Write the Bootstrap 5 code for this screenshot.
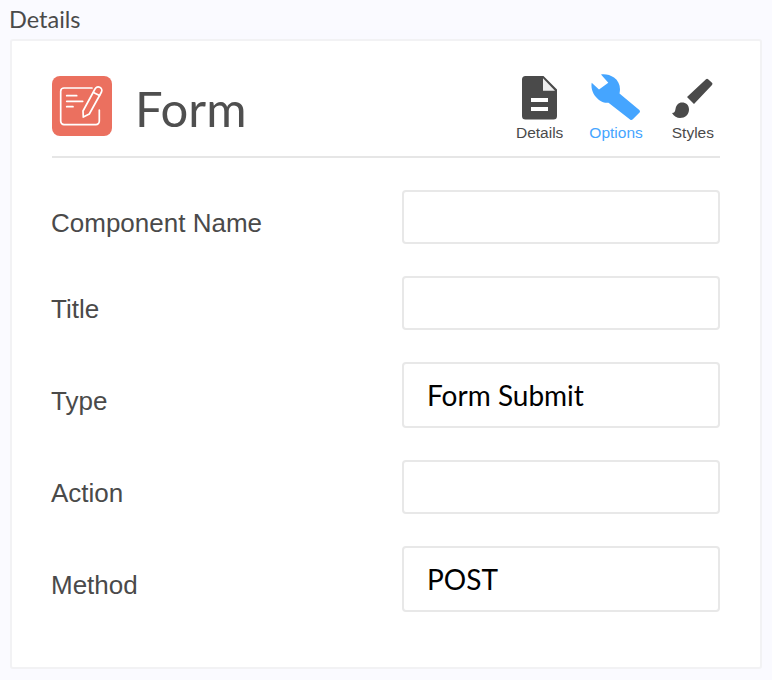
<!DOCTYPE html>
<html lang="en">
<head>
  <meta charset="UTF-8">
  <title>Form Details</title>
  <link rel="stylesheet" href="https://cdn.jsdelivr.net/npm/bootstrap@5.3.0/dist/css/bootstrap.min.css">
  <style>
    body {
      background-color: #fafaff;
      font-family: "Liberation Sans", sans-serif;
      color: #4a4a4a;
      height: 680px;
      overflow: hidden;
    }

    .page-title {
      font-family: Lato, sans-serif;
      font-size: 23.5px;
      line-height: 25px;
      padding: 7px 0 7px 9px;
      color: #4a4a4a;
    }

    .panel {
      margin-left: 10px;
      width: 752px;
      height: 630px;
      background: #fff;
      border: 2px solid #f2f2f4;
      border-radius: 3px;
      padding: 35px 40px 0 40px;
    }

    .panel-head {
      height: 82px;
      border-bottom: 2px solid #e6e6e6;
      padding-right: 6px;
    }

    .form-logo {
      width: 60px;
      height: 60px;
      background: #eb705f;
      border-radius: 8px;
    }

    .form-name {
      font-family: Lato, sans-serif;
      font-size: 49px;
      line-height: 60px;
      margin: 2px 0 0 23px;
      color: #4f4f4f;
    }

    .tab-item {
      font-size: 15.5px;
      line-height: 16px;
      color: #4a4a4a;
      text-align: center;
    }

    .tab-item svg {
      display: block;
      margin: -2px auto 3px;
    }

    .tab-active {
      color: #45a5ff;
    }

    .tab-gap-a {
      margin-right: 26px;
    }

    .tab-gap-b {
      margin-right: 29px;
    }

    .field-list {
      padding-top: 32px;
      gap: 32px;
    }

    .field-label {
      font-size: 26px;
      line-height: 30px;
      width: 351px;
      margin-left: -1px;
      flex: none;
      padding-top: 18px;
      color: #4a4a4a;
    }

    .field-input {
      width: 318px;
      height: 54px;
      flex: none;
      border: 2px solid #e8e8e8;
      border-radius: 4px;
      padding: 0 23px;
      font-family: Lato, sans-serif;
      font-size: 28px;
      color: #000;
    }

    .field-filled {
      height: 66px;
    }

    .field-filled-row .field-label {
      padding-top: 24px;
    }
  </style>
</head>
<body>

  <div class="page-title">Details</div>

  <div class="panel">
    <!-- Header with logo and tabs -->
    <div class="panel-head d-flex justify-content-between">
      <div class="d-flex align-items-start">
        <div class="form-logo d-flex align-items-center justify-content-center">
          <svg width="60" height="60" viewBox="0 0 60 60" fill="none" stroke="#fff" stroke-width="1.7" stroke-linecap="round" stroke-linejoin="round">
            <path d="M40 12H12a3.300 3.300 0 0 0-3.300 3.300v30a3.300 3.300 0 0 0 3.300 3.300h32a3.300 3.300 0 0 0 3.300-3.300V34"/>
            <path d="M14.700 19.700h10M14.700 25.300h16M14.700 30.700h6.300"/>
            <path d="M43 13a3.500 3.500 0 0 1 6.500 3L37.300 38l-6 3-.3-6z"/>
            <path d="M41.500 16.500l6 3"/>
          </svg>
        </div>
        <div class="form-name">Form</div>
      </div>
      <div class="d-flex">
        <div class="tab-item tab-gap-a">
          <svg width="36" height="48" viewBox="0 0 36 48">
            <path fill="#4a4a4a" fill-rule="evenodd" d="M3.500 2h18L35 15.500V42a3.500 3.500 0 0 1-3.500 3.500h-28A3.500 3.500 0 0 1 0 42V5.500A3.500 3.500 0 0 1 3.500 2zM9 24v4h17v-4zM9 33v4h17v-4z"/>
            <path fill="#eeeeee" d="M21 4.300L33 16.700H21z"/>
          </svg>
          Details
        </div>
        <div class="tab-item tab-active tab-gap-b">
          <svg width="50" height="48" viewBox="-1 0 50 48">
            <path fill="#45a5ff" d="M9 .4L16.300 8.700 7 15.500-.3 8.700C-1.500 16 2 22 7 26c3 2.300 6 3 9.500 2.800L38 45.500a2 2 0 0 0 2.800-.2l6.500-6.500a2 2 0 0 0 0-2.800L27.500 19.500C29 13 27 7 22 3.500 18.500 .8 13 -.3 9 .4z"/>
          </svg>
          Options
        </div>
        <div class="tab-item">
          <svg width="42" height="48" viewBox="0 0 42 48">
            <path fill="#4a4a4a" d="M34 5.300a1.500 1.500 0 0 1 2.100 0l3.900 3.500a1.500 1.500 0 0 1 0 2.100L22 30l-7-7z"/>
            <path fill="#4a4a4a" d="M10 28.500c4 0 7 2.500 7 7 0 5-4 8.500-9 8.500-3 0-6-1.500-8-5 2.500 0 3-1.500 3.500-4 .7-4 3-6.500 6.500-6.500z"/>
          </svg>
          Styles
        </div>
      </div>
    </div>

    <!-- Fields -->
    <div class="field-list d-flex flex-column">
      <div class="d-flex">
        <label class="field-label">Component Name</label>
        <input type="text" class="field-input form-control shadow-none">
      </div>
      <div class="d-flex">
        <label class="field-label">Title</label>
        <input type="text" class="field-input form-control shadow-none">
      </div>
      <div class="d-flex field-filled-row">
        <label class="field-label">Type</label>
        <input type="text" class="field-input field-filled form-control shadow-none" value="Form Submit">
      </div>
      <div class="d-flex">
        <label class="field-label">Action</label>
        <input type="text" class="field-input form-control shadow-none">
      </div>
      <div class="d-flex field-filled-row">
        <label class="field-label">Method</label>
        <input type="text" class="field-input field-filled form-control shadow-none" value="POST">
      </div>
    </div>
  </div>

  <script src="https://cdn.jsdelivr.net/npm/bootstrap@5.3.0/dist/js/bootstrap.bundle.min.js"></script>
</body>
</html>
